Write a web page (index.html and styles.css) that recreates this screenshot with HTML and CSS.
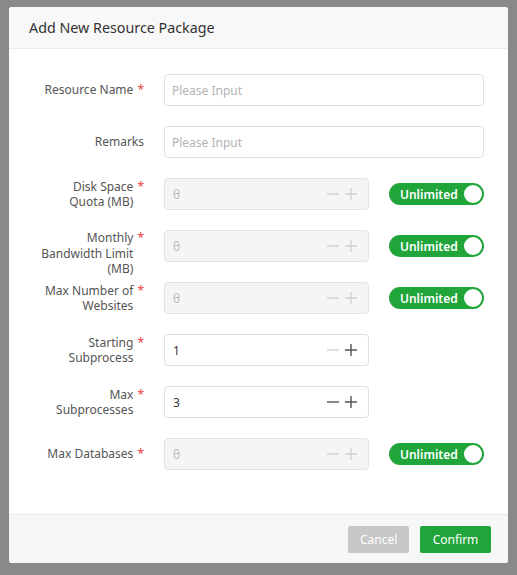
FILE: index.html
```html
<!DOCTYPE html>
<html lang="en">
<head>
<meta charset="utf-8">
<title>Add New Resource Package</title>
<link rel="stylesheet" href="styles.css">
</head>
<body>
<div class="dialog">
  <div class="dialog-header">Add New Resource Package</div>
  <div class="dialog-body">
    <div class="form">
      <div class="row">
        <div class="label"><div class="label-inner"><span class="label-text">Resource Name</span><span class="req">*</span></div></div>
        <input class="input" type="text" placeholder="Please Input">
      </div>
      <div class="row">
        <div class="label"><div class="label-inner"><span class="label-text">Remarks</span></div></div>
        <input class="input" type="text" placeholder="Please Input">
      </div>
      <div class="row">
        <div class="label"><div class="label-inner"><span class="label-text">Disk Space<br>Quota (MB)</span><span class="req">*</span></div></div>
        <div class="num disabled"><span class="num-value">θ</span><span class="step minus"><svg viewBox="0 0 12 12"><path d="M0 6h12"/></svg></span><span class="step plus"><svg viewBox="0 0 12 12"><path d="M0 6h12M6 0v12"/></svg></span></div>
        <div class="switch"><span class="switch-text">Unlimited</span><span class="knob"></span></div>
      </div>
      <div class="row">
        <div class="label"><div class="label-inner"><span class="label-text">Monthly<br>Bandwidth Limit<br>(MB)</span><span class="req">*</span></div></div>
        <div class="num disabled"><span class="num-value">θ</span><span class="step minus"><svg viewBox="0 0 12 12"><path d="M0 6h12"/></svg></span><span class="step plus"><svg viewBox="0 0 12 12"><path d="M0 6h12M6 0v12"/></svg></span></div>
        <div class="switch"><span class="switch-text">Unlimited</span><span class="knob"></span></div>
      </div>
      <div class="row">
        <div class="label"><div class="label-inner"><span class="label-text">Max Number of<br>Websites</span><span class="req">*</span></div></div>
        <div class="num disabled"><span class="num-value">θ</span><span class="step minus"><svg viewBox="0 0 12 12"><path d="M0 6h12"/></svg></span><span class="step plus"><svg viewBox="0 0 12 12"><path d="M0 6h12M6 0v12"/></svg></span></div>
        <div class="switch"><span class="switch-text">Unlimited</span><span class="knob"></span></div>
      </div>
      <div class="row">
        <div class="label"><div class="label-inner"><span class="label-text">Starting<br>Subprocess</span><span class="req">*</span></div></div>
        <div class="num"><span class="num-value">1</span><span class="step minus off"><svg viewBox="0 0 12 12"><path d="M0 6h12"/></svg></span><span class="step plus"><svg viewBox="0 0 12 12"><path d="M0 6h12M6 0v12"/></svg></span></div>
      </div>
      <div class="row">
        <div class="label"><div class="label-inner"><span class="label-text">Max<br>Subprocesses</span><span class="req">*</span></div></div>
        <div class="num"><span class="num-value">3</span><span class="step minus"><svg viewBox="0 0 12 12"><path d="M0 6h12"/></svg></span><span class="step plus"><svg viewBox="0 0 12 12"><path d="M0 6h12M6 0v12"/></svg></span></div>
      </div>
      <div class="row">
        <div class="label"><div class="label-inner"><span class="label-text">Max Databases</span><span class="req">*</span></div></div>
        <div class="num disabled"><span class="num-value">θ</span><span class="step minus"><svg viewBox="0 0 12 12"><path d="M0 6h12"/></svg></span><span class="step plus"><svg viewBox="0 0 12 12"><path d="M0 6h12M6 0v12"/></svg></span></div>
        <div class="switch"><span class="switch-text">Unlimited</span><span class="knob"></span></div>
      </div>
    </div>
  </div>
  <div class="dialog-footer">
    <button class="btn btn-cancel" type="button">Cancel</button>
    <button class="btn btn-confirm" type="button">Confirm</button>
  </div>
</div>
</body>
</html>
```

FILE: styles.css
```css
html, body {
  margin: 0;
  padding: 0;
}
body {
  background: #898989;
  font-family: "Noto Sans", "Open Sans", sans-serif;
  width: 517px;
  height: 575px;
  overflow: hidden;
}
.dialog {
  margin: 7px 0 0 9px;
  width: 499px;
  height: 556px;
  background: #fff;
  border-radius: 3px;
  display: flex;
  flex-direction: column;
  overflow: hidden;
}
.dialog-header {
  height: 42px;
  box-sizing: border-box;
  padding: 0 20px;
  line-height: 41px;
  background: #f8f8f8;
  border-bottom: 1px solid #ebebeb;
  font-size: 14.3px;
  color: #333;
}
.dialog-body {
  flex: 1;
  padding: 25px 24px 0 20px;
}
.form {
  display: flex;
  flex-direction: column;
  gap: 20px;
}
.row {
  display: flex;
  align-items: center;
  height: 32px;
}
.label {
  width: 115px;
  flex: none;
  align-self: flex-start;
  min-height: 32px;
  display: flex;
  align-items: center;
  justify-content: flex-end;
  margin-right: 20px;
}
.label-inner {
  display: flex;
  align-items: flex-start;
}
.label-text {
  text-align: right;
  font-size: 12px;
  line-height: 15.5px;
  color: #555;
}
.req {
  color: #f04040;
  font-size: 12px;
  line-height: 15.5px;
  margin-left: 4px;
}
.input {
  width: 320px;
  height: 32px;
  box-sizing: border-box;
  border: 1px solid #dcdfe6;
  border-radius: 4px;
  padding: 0 7px;
  font-family: inherit;
  font-size: 12px;
  color: #333;
  outline: none;
  background: #fff;
}
.input::placeholder {
  color: #b4b4b4;
}
.num {
  width: 205px;
  height: 32px;
  box-sizing: border-box;
  border: 1px solid #dcdfe6;
  border-radius: 4px;
  display: flex;
  align-items: center;
  padding: 0 11px 0 8px;
  background: #fff;
}
.num.disabled {
  background: #f5f5f5;
  border-color: #e2e2e2;
}
.num-value {
  flex: 1;
  font-size: 12px;
  color: #333;
}
.num.disabled .num-value {
  color: #bdbdbd;
}
.step {
  width: 12px;
  height: 12px;
  display: flex;
}
.step svg {
  width: 12px;
  height: 12px;
  fill: none;
  stroke: #555;
  stroke-width: 1.4;
}
.plus {
  margin-left: 6px;
}
.step.off svg,
.num.disabled .step svg {
  stroke: #d2d2d2;
}
.switch {
  margin-left: 20px;
  width: 95px;
  height: 22px;
  box-sizing: border-box;
  border-radius: 11px;
  background: #20a53a;
  display: flex;
  align-items: center;
  justify-content: space-between;
  padding: 0 2px 0 11px;
}
.switch-text {
  color: #fff;
  font-size: 12px;
  font-weight: 600;
}
.knob {
  width: 18px;
  height: 18px;
  border-radius: 50%;
  background: #fff;
}
.dialog-footer {
  height: 49px;
  box-sizing: border-box;
  border-top: 1px solid #e9e9e9;
  background: #f6f7f7;
  display: flex;
  justify-content: flex-end;
  align-items: center;
  gap: 11px;
  padding: 0 17px 0 0;
}
.btn {
  height: 27px;
  border: none;
  border-radius: 2px;
  font-family: inherit;
  font-size: 12px;
  color: #fff;
  padding: 0 12px;
}
.btn-cancel {
  width: 61px;
  background: #c8c8c8;
}
.btn-confirm {
  width: 71px;
  background: #20a53a;
}
```
